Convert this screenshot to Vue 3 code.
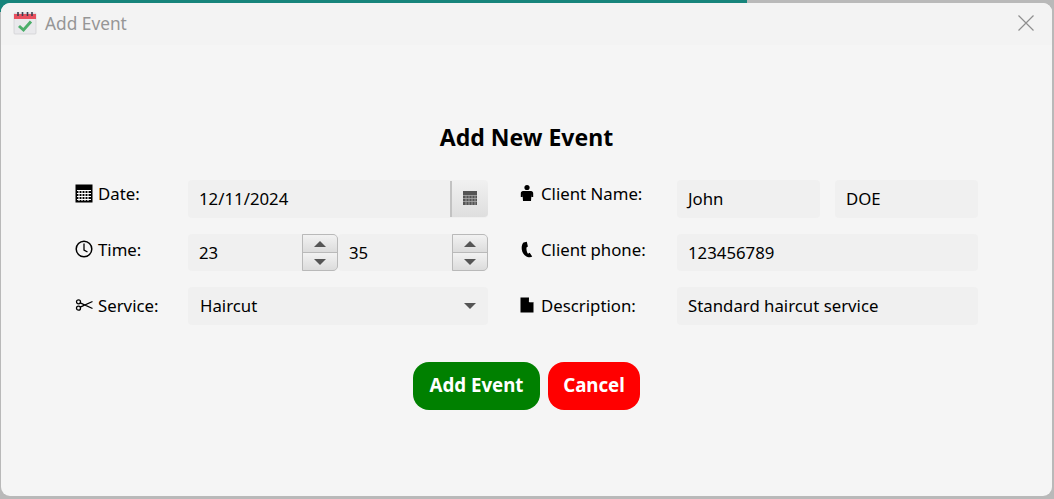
<script setup>
const stepper = ['23', '35']
</script>

<template>
  <div class="screen">
    <div class="progress"></div>
    <div class="window">
      <header class="titlebar">
        <svg class="app-icon" width="24" height="24" viewBox="0 0 24 24">
          <rect x="1" y="2" width="22" height="21" rx="1" fill="#e9e9ec" stroke="#c9c9cc" stroke-width=".6"/>
          <rect x="1" y="3" width="22" height="5" fill="#e8505f"/>
          <path d="M5 1v4M9.500 1v4M14.500 1v4M19 1v4" stroke="#3c3f4f" stroke-width="1.600"/>
          <path d="M6 15l4.500 4L18 10.500" fill="none" stroke="#4cae6a" stroke-width="3"/>
        </svg>
        <span class="window-title">Add Event</span>
        <svg class="close" width="16" height="16" viewBox="0 0 16 16">
          <path d="M.5.500l15 15M15.500.500l-15 15" stroke="#8f8f8f" stroke-width="1.200"/>
        </svg>
      </header>

      <main class="content">
        <h1>Add New Event</h1>
        <div class="form">
          <label class="label r1">
            <svg width="18" height="19" viewBox="0 0 18 19"><rect x=".5" y=".5" width="17" height="18" fill="#000"/><path d="M2 6.500h14M2 9.500h14M2 12.500h14M2 15.500h14M4 6v11M7 6v11M10 6v11M13 6v11" stroke="#fff" stroke-width="1.100"/></svg>
            <span>Date:</span>
          </label>
          <div class="field date">
            <span class="value">12/11/2024</span>
            <div class="cal-btn">
              <svg width="14" height="16" viewBox="0 0 14 16"><rect width="14" height="14" fill="#555"/><path d="M0 4.500h14M0 7.500h14M0 10.500h14M3 4v10M6 4v10M9 4v10M12 4v10" stroke="#aaa" stroke-width=".8"/></svg>
            </div>
          </div>
          <label class="label right r1">
            <svg width="14" height="19" viewBox="0 0 14 19"><circle cx="7" cy="3.500" r="2.600"/><path d="M3 7h8c1.400 0 2.200 1 2.200 2.500v3.500h-1.700v-3l-.5 7H3l-.5-7v3H.8V9.500C.8 8 1.600 7 3 7z"/></svg>
            <span>Client Name:</span>
          </label>
          <div class="name-pair">
            <div class="field"><span class="value">John</span></div>
            <div class="field"><span class="value">DOE</span></div>
          </div>

          <label class="label r2">
            <svg width="18" height="18" viewBox="0 0 18 18"><circle cx="9" cy="9" r="7.800" fill="none" stroke="#000" stroke-width="1.500"/><path d="M9 3.500V10l3.500 2" fill="none" stroke="#000" stroke-width="1.300"/></svg>
            <span>Time:</span>
          </label>
          <div class="time-pair">
            <div v-for="v in stepper" :key="v" class="field spinner">
              <span class="value">{{ v }}</span>
              <div class="spin-btns">
                <div class="spin up"><i class="tri tri-up"></i></div>
                <div class="spin down"><i class="tri tri-down"></i></div>
              </div>
            </div>
          </div>
          <label class="label right r2">
            <svg width="14" height="19" viewBox="0 0 14 19"><path d="M3.500 2.500C2 4 1.400 6.500 1.800 9.500c.4 3.500 2.800 6.500 5.700 7.400 1.500.4 3.800.5 4.700-.4L9.700 12.800l-1.700 1C6.900 12.500 6.200 9.500 6.500 7.500l1.400-1L6.800 1.800z"/></svg>
            <span>Client phone:</span>
          </label>
          <div class="field"><span class="value">123456789</span></div>

          <label class="label r3">
            <svg width="18" height="12" viewBox="0 0 18 12"><circle cx="3.500" cy="2.800" r="2" fill="none" stroke="#000" stroke-width="1.300"/><circle cx="3.500" cy="9.200" r="2" fill="none" stroke="#000" stroke-width="1.300"/><path d="M5.200 3.800L17.500 9.500M5.200 8.200L17.500 2.500" stroke="#000" stroke-width="1.300"/></svg>
            <span>Service:</span>
          </label>
          <div class="field select">
            <span class="value">Haircut</span>
            <i class="tri tri-down wide"></i>
          </div>
          <label class="label right r3">
            <svg width="14" height="19" viewBox="0 0 14 19"><path d="M.5 1.500h8.500l4.500 4.500v10.500H.5zM9 1.500V6h4.500" fill="#000"/><path d="M9.500 1.500l-.2 4.500h4.200" fill="none" stroke="#f5f5f5" stroke-width=".6"/></svg>
            <span>Description:</span>
          </label>
          <div class="field"><span class="value">Standard haircut service</span></div>
        </div>

        <div class="actions">
          <button class="btn add">Add Event</button>
          <button class="btn cancel">Cancel</button>
        </div>
      </main>
    </div>
  </div>
</template>

<style>
html, body { margin: 0; padding: 0; background: #d0d0d0; overflow: hidden; }
</style>

<style scoped>
.screen {
  position: relative;
  width: 1054px;
  height: 499px;
  background: #b9b9b9;
  padding: 3px 2px 3px 1px;
  box-sizing: border-box;
  overflow: hidden;
  font-family: "Noto Sans", "Open Sans", sans-serif;
  color: #000;
}
.progress {
  position: absolute;
  left: 0;
  top: 0;
  width: 747px;
  height: 12px;
  background: #17847b;
}
.window {
  position: relative;
  height: 100%;
  background: #f5f5f5;
  border-radius: 9px;
  overflow: hidden;
}
.titlebar {
  height: 42px;
  box-sizing: border-box;
  padding: 0 18px 2px 12px;
  background: #f3f3f3;
  display: flex;
  align-items: center;
}
.app-icon { flex: none; }
.window-title {
  margin-left: 8px;
  font-size: 17.300px;
  color: #969696;
}
.close { margin-left: auto; }
.content {
  display: flex;
  flex-direction: column;
  align-items: center;
}
h1 {
  margin: 0;
  padding-top: 77px;
  font-size: 23px;
  line-height: 30px;
  font-weight: 700;
}
.form {
  align-self: flex-start;
  margin: 28px 0 0 74px;
  display: grid;
  grid-template-columns: 113px 300px 189px 301px;
  grid-template-rows: 38px 37px 38px;
  row-gap: 16px;
  column-gap: 0;
}
.label {
  display: flex;
  align-items: center;
  gap: 5px;
  font-size: 16.800px;
  white-space: nowrap;
  align-self: start;
}
.r1 { height: 27px; }
.r2 { height: 30px; }
.r3 { height: 36px; }
.label.right { padding-left: 32px; gap: 7px; }
.field {
  display: flex;
  align-items: center;
  background: #f0f0f0;
  border-radius: 4px;
  min-width: 0;
  position: relative;
  height: 100%;
}
.value {
  padding: 0 0 1px 11px;
  font-size: 16.800px;
  white-space: nowrap;
}
.date { justify-content: space-between; }
.cal-btn {
  width: 36px;
  height: 36px;
  display: flex;
  align-items: center;
  justify-content: center;
  border-left: 2px solid #c2c2c2;
  background: linear-gradient(#f0f0f0, #dedede);
  border-radius: 0 4px 4px 0;
}
.name-pair {
  display: grid;
  grid-template-columns: 143px 143px;
  gap: 15px;
}
.time-pair {
  display: grid;
  grid-template-columns: 150px 150px;
}
.spinner { justify-content: space-between; border-radius: 4px; }
.spin-btns {
  width: 36px;
  height: 100%;
  display: flex;
  flex-direction: column;
  border: 1px solid #b9b9b9;
  box-sizing: border-box;
  border-radius: 0 5px 5px 0;
  overflow: hidden;
  gap: 1px;
  background: #b9b9b9;
}
.spin {
  flex: 1;
  display: flex;
  align-items: center;
  justify-content: center;
  background: linear-gradient(#f2f2f2, #dcdcdc);
}
.tri { display: block; width: 0; height: 0; border-left: 6px solid transparent; border-right: 6px solid transparent; }
.tri-up { border-bottom: 6px solid #555; }
.tri-down { border-top: 6px solid #555; }
.select { justify-content: space-between; }
.select .value { padding-left: 12px; }
.wide { margin-right: 12px; }
.actions {
  display: flex;
  gap: 8px;
  margin-top: 37px;
}
.btn {
  height: 48px;
  border: 0;
  border-radius: 16px;
  color: #fff;
  font-family: inherit;
  font-size: 18.700px;
  font-weight: 700;
  padding: 0 0 3px;
}
.add { width: 127px; background: #008000; }
.cancel { width: 92px; background: #ff0000; }
</style>
